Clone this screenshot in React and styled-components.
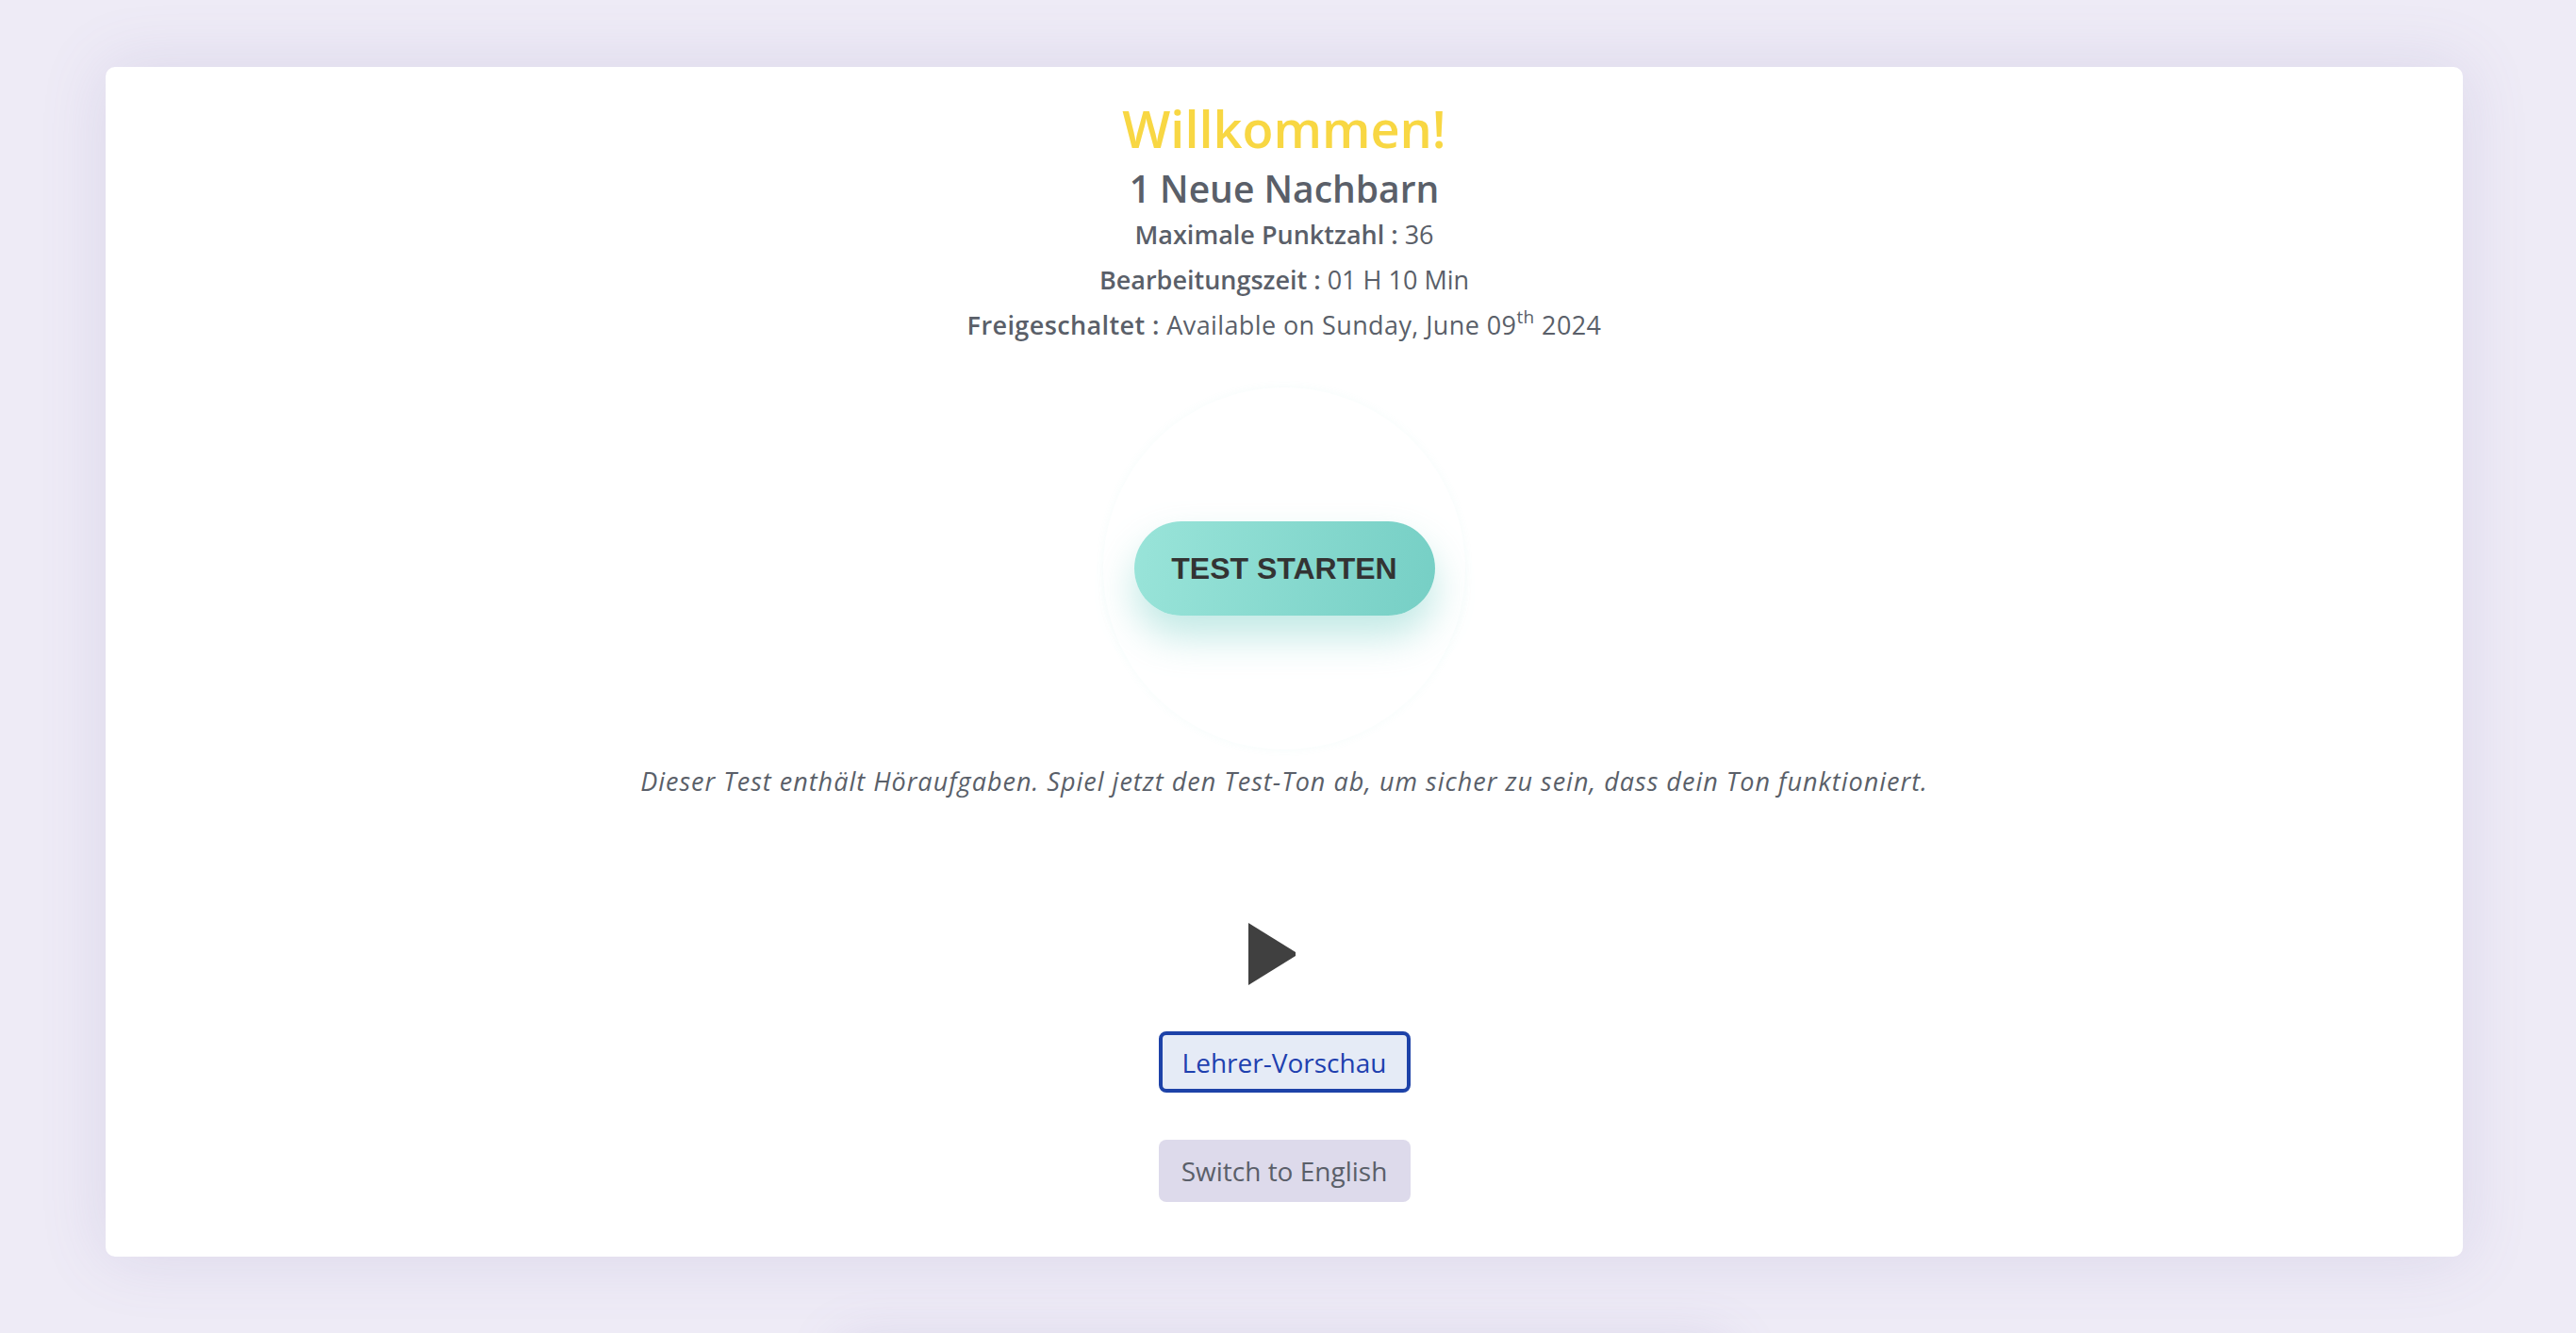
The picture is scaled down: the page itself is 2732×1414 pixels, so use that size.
import React from "react"
import styled, { createGlobalStyle } from 'styled-components';

const GlobalStyle = createGlobalStyle`
    html, body {
        margin: 0;
        padding: 0;
        background-color: #eeebf6;
        font-family: "Open Sans", "Liberation Sans", sans-serif;
    }
`;

const Page = styled.div`
    display: flex;
    flex-direction: column;
    align-items: center;
    padding: 71px 120px 0 112px;
    box-sizing: border-box;
    width: 100%;
`;

const Card = styled.div`
    width: 100%;
    box-sizing: border-box;
    background-color: #ffffff;
    border-radius: 10px;
    box-shadow: 0 0 70px rgba(120, 105, 175, 0.16);
    display: flex;
    flex-direction: column;
    align-items: center;
    padding: 35px 0 58px;
    color: #5a5f69;
`;

const Title = styled.h1`
    margin: 0;
    font-size: 54px;
    line-height: 60px;
    font-weight: 600;
    color: #f8d743;
`;

const Subtitle = styled.h2`
    margin: 12px 0 0;
    font-size: 39px;
    line-height: 44px;
    font-weight: 600;
    color: #5a5f69;
`;

const InfoList = styled.div`
    margin-top: 3px;
    display: flex;
    flex-direction: column;
    align-items: center;
`;

const InfoLine = styled.div`
    font-size: 27px;
    line-height: 48px;
    font-weight: 400;
    letter-spacing: ${p => p.$spread || '0'};

    b {
        font-weight: 600;
    }

    sup {
        font-size: 19px;
        line-height: 0;
        vertical-align: 12px;
    }
`;

const Halo = styled.div`
    margin-top: 42px;
    width: 384px;
    height: 384px;
    border-radius: 50%;
    box-shadow: 0 0 10px rgba(118, 207, 197, 0.07);
    display: flex;
    align-items: center;
    justify-content: center;
`;

const StartButton = styled.button`
    width: 319px;
    height: 100px;
    border: none;
    border-radius: 50px;
    background: linear-gradient(100deg, #99e4d9 0%, #76cfc5 100%);
    box-shadow: 0 22px 40px rgba(118, 207, 197, 0.45);
    font-family: "Liberation Sans", Arial, sans-serif;
    font-weight: 700;
    font-size: 32px;
    color: #333333;
    cursor: pointer;
`;

const Notice = styled.p`
    margin: 14px 0 0;
    font-size: 27px;
    line-height: 40px;
    letter-spacing: 1px;
    font-style: italic;
    color: #5a5f69;
`;

const PlayButton = styled.button`
    margin-top: 130px;
    width: 76px;
    height: 66px;
    padding: 0;
    border: none;
    background: none;
    cursor: pointer;
    display: flex;
`;

const SmallButton = styled.button`
    width: 267px;
    height: ${p => p.$outlined ? '65px' : '66px'};
    margin-top: ${p => p.$gap};
    box-sizing: border-box;
    border-radius: 8px;
    border: ${p => p.$outlined ? '4px solid #1d42a8' : 'none'};
    background-color: ${p => p.$outlined ? '#e5ebf6' : '#dddaeb'};
    color: ${p => p.$outlined ? '#1e40af' : '#5a5f69'};
    font-family: "Open Sans", "Liberation Sans", sans-serif;
    font-size: 28px;
    font-weight: 400;
    cursor: pointer;
`;

const Peek = styled.div`
    margin-top: 92px;
    width: 940px;
    height: 120px;
    background-color: #ffffff;
    border-radius: 10px;
    box-shadow: 0 0 60px rgba(120, 105, 175, 0.18);
`;

function PlayIcon() {
    return (
        <svg width="76" height="66" viewBox="0 0 76 66">
            <polygon points="0,0 50,31 50,35 0,66" fill="#404040" />
        </svg>
    );
}

export default function App() {
    return (
        <Page>
            <GlobalStyle />
            <Card>
                <Title>Willkommen!</Title>
                <Subtitle>1 Neue Nachbarn</Subtitle>
                <InfoList>
                    <InfoLine><b>Maximale Punktzahl :</b> 36</InfoLine>
                    <InfoLine><b>Bearbeitungszeit :</b> 01 H 10 Min</InfoLine>
                    <InfoLine $spread="0.4px"><b>Freigeschaltet :</b> Available on Sunday, June 09<sup>th</sup> 2024</InfoLine>
                </InfoList>
                <Halo>
                    <StartButton>TEST STARTEN</StartButton>
                </Halo>
                <Notice>Dieser Test enthält Höraufgaben. Spiel jetzt den Test-Ton ab, um sicher zu sein, dass dein Ton funktioniert.</Notice>
                <PlayButton aria-label="Test-Ton abspielen"><PlayIcon /></PlayButton>
                <SmallButton $outlined $gap="49px">Lehrer-Vorschau</SmallButton>
                <SmallButton $gap="50px">Switch to English</SmallButton>
            </Card>
            <Peek />
        </Page>
    )
}
